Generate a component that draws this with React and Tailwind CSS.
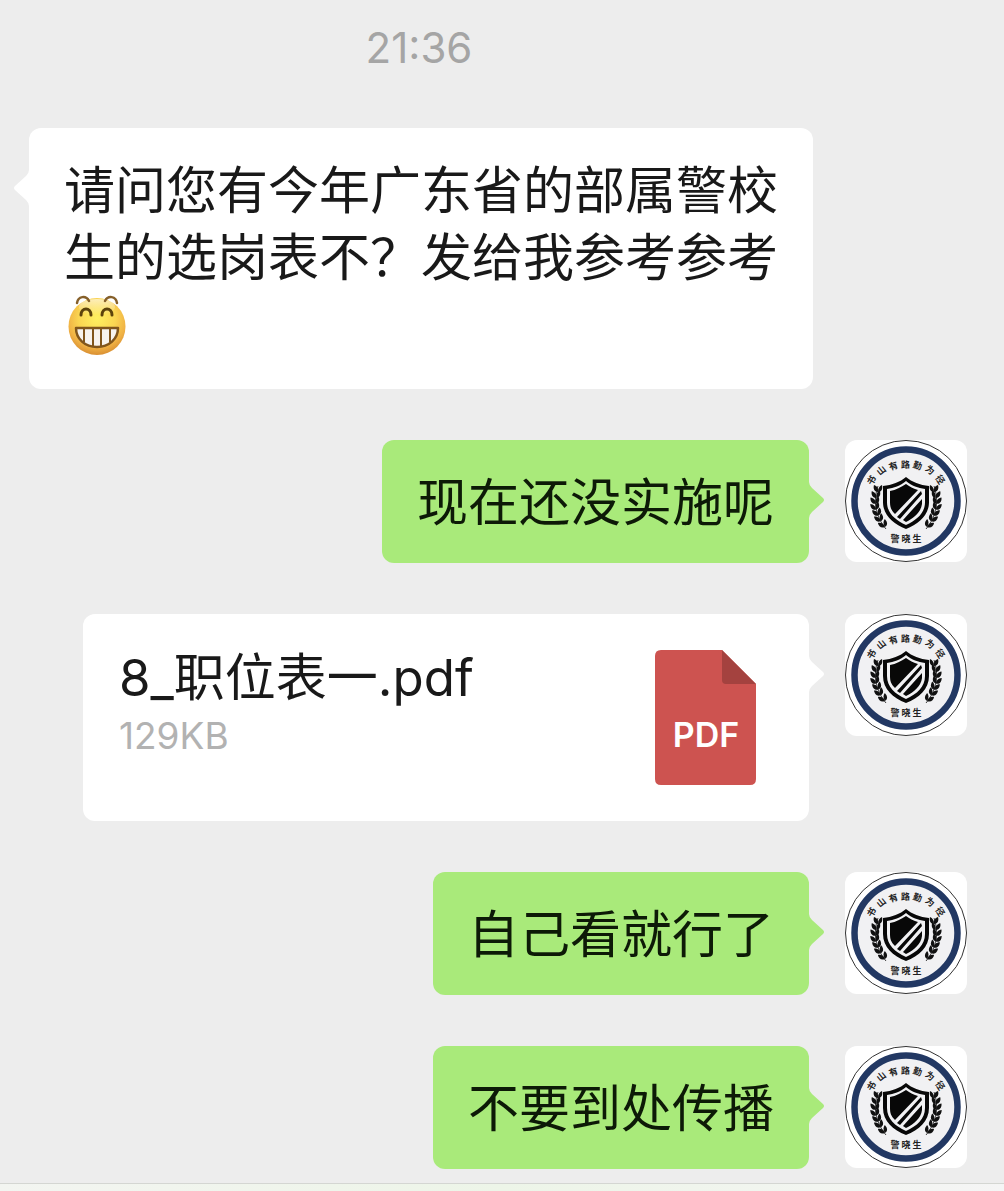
import clsx from "clsx";

const motto = [
    { char: "书", angle: -59, y: 24 },
    { char: "山", angle: -39, y: 25 },
    { char: "有", angle: -20, y: 27 },
    { char: "路", angle: -1, y: 28 },
    { char: "勤", angle: 18, y: 27 },
    { char: "为", angle: 38, y: 25 },
    { char: "径", angle: 58, y: 24 },
];

const leaves = [
    { x: 32, y: 48 },
    { x: 30, y: 54 },
    { x: 29, y: 60 },
    { x: 29, y: 66 },
    { x: 31, y: 72 },
    { x: 33, y: 78 },
    { x: 37, y: 84 },
];

const messages = [
    { id: 1, from: "them", text: "请问您有今年广东省的部属警校生的选岗表不？发给我参考参考", emoji: true },
    { id: 2, from: "me", text: "现在还没实施呢" },
    { id: 3, from: "me", file: { name: "8_职位表一.pdf", size: "129KB" } },
    { id: 4, from: "me", text: "自己看就行了" },
    { id: 5, from: "me", text: "不要到处传播" },
];

const Branch = () => (
    <g>
        <path d="M33 46C28 60 30 76 41 89" fill="none" stroke="#111" strokeWidth="0.8" />
        {leaves.map((leaf, i) => (
            <g key={i} transform={`translate(${leaf.x} ${leaf.y}) rotate(${-i * 5})`}>
                <path d="M1 4C-3 4 -4 0 -3 -3C0 -2 2 1 1 4Z" />
                <path d="M1 4C1 0 2.500 -2 5 -3C6 1 4.500 4 1 4Z" />
            </g>
        ))}
    </g>
);

const Avatar = () => (
    <svg viewBox="0 0 122 122" className="size-[122px] shrink-0 rounded-xl bg-white" role="img" aria-label="警晓生">
        <circle cx="61" cy="61" r="60.500" fill="#fff" stroke="#333" strokeWidth="1" />
        <circle cx="61" cy="61" r="51.500" fill="#f1f1f3" stroke="#223863" strokeWidth="6.500" />
        <g fill="#222" fontSize="9" fontWeight="700" textAnchor="middle" className="font-['Noto_Sans_CJK_SC',sans-serif]">
            {motto.map((item) => (
                <text key={item.char} x="61" y={item.y} transform={`rotate(${item.angle} 61 61)`}>{item.char}</text>
            ))}
            <text x="50" y="102">警</text>
            <text x="61" y="102">晓</text>
            <text x="72" y="102">生</text>
        </g>
        <g fill="#111">
            <Branch />
            <g transform="translate(122 0) scale(-1 1)"><Branch /></g>
        </g>
        <path d="M61 37C67 42 75 45 84 46V62C84 75 74 84 61 89C48 84 38 75 38 62V46C47 45 55 42 61 37Z" fill="#080808" />
        <path d="M61 41C67 46 73 48 80 49V62C80 73 72 80 61 85C50 80 42 73 42 62V49C49 48 55 46 61 41Z" fill="#f1f1f3" />
        <path d="M61 44C65 47 69 49 73 50L50 74C46 70 45 67 45 62V51C51 50 56 47 61 44Z" fill="#080808" />
        <path d="M76 51L77 54L55 79L52 77ZM77 59V64C76 72 69 78 61 82L58 80Z" fill="#080808" />
    </svg>
);

const Grin = () => (
    <svg viewBox="-2 0 62 60" className="mt-1 mb-[7px] inline-block h-[60px] w-[62px] align-top" role="img" aria-label="呲牙">
        <defs>
            <radialGradient id="face" cx="50%" cy="35%" r="65%">
                <stop offset="0" stopColor="#fff060" />
                <stop offset="0.500" stopColor="#fad552" />
                <stop offset="0.800" stopColor="#f0b245" />
                <stop offset="1" stopColor="#d98f32" />
            </radialGradient>
            <linearGradient id="shine" x1="0" y1="0" x2="0" y2="1">
                <stop offset="0" stopColor="#fff" stopOpacity="0.600" />
                <stop offset="1" stopColor="#fff" stopOpacity="0" />
            </linearGradient>
        </defs>
        <circle cx="31" cy="31.500" r="28.500" fill="url(#face)" />
        <ellipse cx="31" cy="12" rx="18" ry="8" fill="url(#shine)" />
        <g fill="none" stroke="#86602a" strokeWidth="2.500" strokeLinecap="round">
            <path d="M11 8C12 1 20 0 23 6" />
            <path d="M39 6C42 0 50 1 51 8" />
        </g>
        <g fill="none" stroke="#5d430c" strokeWidth="3" strokeLinecap="round">
            <path d="M15 20C15 12 25 12 25 20" />
            <path d="M36 20C36 12 46 12 46 20" />
        </g>
        <path d="M10 33H52C52 44 43 52 31 52C19 52 10 44 10 33Z" fill="#f7f3ee" stroke="#80551c" strokeWidth="2.500" strokeLinejoin="round" />
        <path d="M18 33V47M27 33V51M35 33V51M44 33V47" stroke="#80551c" strokeWidth="2" />
    </svg>
);

const PdfIcon = () => (
    <svg viewBox="0 0 101 135" className="h-[135px] w-[101px] shrink-0" role="img" aria-label="PDF">
        <path d="M6 0H67L101 34V129Q101 135 95 135H6Q0 135 0 129V6Q0 0 6 0Z" fill="#cd5350" />
        <path d="M67 0L101 34H71Q67 34 67 30Z" fill="#a4423f" />
        <text x="51" y="97" fill="#fff" fontSize="34" fontWeight="600" textAnchor="middle" className="font-[Inter,sans-serif]">PDF</text>
    </svg>
);

const Tail = ({ side, color }) => (
    <svg
        viewBox="0 0 15 36"
        className={clsx("absolute top-[42px] h-[36px] w-[15px]", side === "left" ? "right-full -scale-x-100" : "left-full", color)}
        aria-hidden="true"
    >
        <path d="M0 0Q0 3 3 6L14 16Q16 18 14 20L3 30Q0 33 0 36Z" fill="currentColor" />
    </svg>
);

const TextBubble = ({ message }) => {
    const mine = message.from === "me";
    return (
        <div className={clsx("relative max-w-[784px] rounded-xl px-[35px] pt-[29px] pb-[27px]", mine ? "bg-[#a9ea7a] text-[#0d1a07]" : "bg-white text-[#191919]")}>
            <Tail side={mine ? "right" : "left"} color={mine ? "text-[#a9ea7a]" : "text-white"} />
            <p className="text-[51px] leading-[67px]">
                {message.text}
                {message.emoji && <Grin />}
            </p>
        </div>
    );
};

const FileBubble = ({ file }) => (
    <a href="#file" className="relative flex w-[726px] items-start justify-between rounded-xl bg-white py-9 pr-[53px] pl-9">
        <Tail side="right" color="text-white" />
        <span className="flex flex-col">
            <span className="text-[51px] leading-[56px] text-[#191919]">{file.name}</span>
            <span className="text-[37px] leading-[60px] text-[#b2b2b2]">{file.size}</span>
        </span>
        <PdfIcon />
    </a>
);

const App = () => {
    return (
        <div className="flex min-h-screen flex-col bg-[#ededed] font-[Inter,'Noto_Sans_CJK_SC',sans-serif]">
            <main className="grow pt-5 pb-[14px]">
                <time className="block pr-[166px] text-center text-[42px] leading-[55px] text-[#a5a5a5]">21:36</time>
                <ul className="mt-[53px] flex flex-col gap-[51px] pr-[37px] pl-[29px]">
                    {messages.map((message) => (
                        <li key={message.id} className={clsx("flex items-start gap-9", message.from === "me" && "justify-end")}>
                            {message.file ? <FileBubble file={message.file} /> : <TextBubble message={message} />}
                            {message.from === "me" && <Avatar />}
                        </li>
                    ))}
                </ul>
            </main>
            <footer className="h-2 border-t border-[#d4d6d2] bg-linear-to-r from-[#f3f5f1] via-[#edf5e8] to-[#f5f5f5]" />
        </div>
    );
};

export default App;
